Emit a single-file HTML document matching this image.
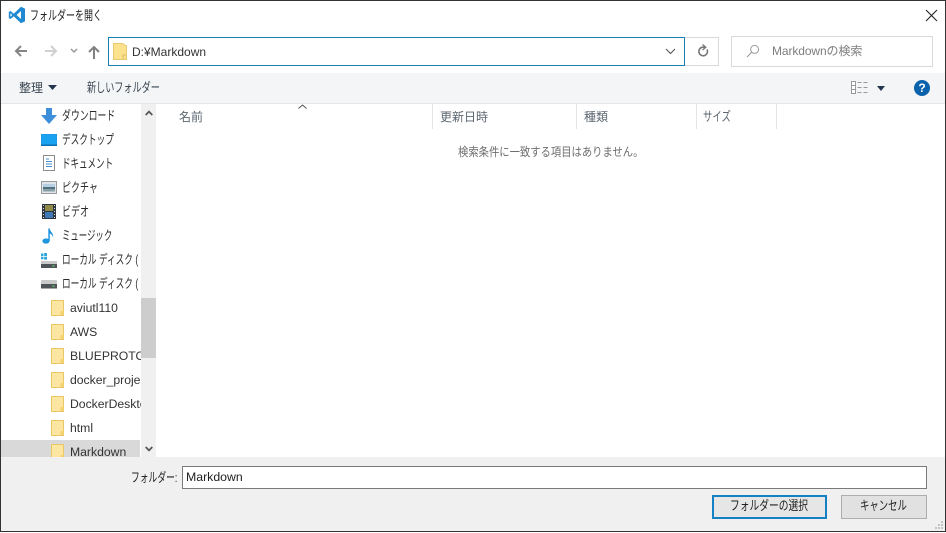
<!DOCTYPE html>
<html><head><meta charset="utf-8">
<style>
html,body{margin:0;padding:0;background:#fff}
body{width:946px;height:533px;position:relative;overflow:hidden;font-family:"Liberation Sans","Noto Sans CJK JP",sans-serif;font-size:12px;color:#333}
.a{position:absolute}
.t{position:absolute;white-space:nowrap;line-height:16px;transform-origin:0 50%}
.k{font-size:13px}
.s{display:inline-block;transform-origin:0 50%;white-space:pre}
svg{position:absolute;overflow:visible}
.nav{color:#2b2b2b;left:62px;font-size:13px}
.tree{color:#333;left:70px;width:71px;overflow:hidden;font-size:12.2px}
.h{color:#5c6670}
</style></head>
<body>
<!-- bottom panel -->
<div class="a" style="left:0;top:457px;width:946px;height:76px;background:#f0f0f0"></div>
<!-- toolbar -->
<div class="a" style="left:0;top:73px;width:946px;height:30px;background:#f3f5f6"></div>
<div class="a" style="left:0;top:103px;width:946px;height:1px;background:#e4e6e8"></div>
<!-- title -->
<svg style="left:8px;top:6px" width="18" height="18" viewBox="0 0 18 18"><path d="M13 .8 17 2.6V15.4L13 17.2 5.8 10.4 2.4 13 .8 12.1V5.9L2.4 5 5.8 7.6ZM13 5 8.6 9 13 13Z M2.4 7.2V10.8L4.3 9Z" fill="#1f8ad2" fill-rule="evenodd"/></svg>
<div class="t k" style="left:30px;top:8px;color:#222;transform:scaleX(.692)">フォルダーを開く</div>
<svg style="left:925px;top:9px" width="13" height="13"><path d="M1 1 12 12M12 1 1 12" stroke="#222" stroke-width="1.1" fill="none"/></svg>
<!-- nav arrows -->
<svg style="left:14px;top:44px" width="14" height="14"><path d="M13 7H2M7 2 2 7 7 12" stroke="#858585" stroke-width="2" fill="none"/></svg>
<svg style="left:44px;top:44px" width="14" height="14"><path d="M1 7H12M7 2 12 7 7 12" stroke="#d0d0d0" stroke-width="2" fill="none"/></svg>
<svg style="left:70px;top:48px" width="8" height="6"><path d="M1 1 4 4 7 1" stroke="#999" stroke-width="1.5" fill="none"/></svg>
<svg style="left:87px;top:45px" width="14" height="14"><path d="M7 14V2M2 7 7 2 12 7" stroke="#808080" stroke-width="2" fill="none"/></svg>
<!-- address -->
<div class="a" style="left:108px;top:37px;width:575px;height:27px;border:1px solid #1b7eb5;background:#fff"></div>
<svg style="left:113px;top:43px" width="14" height="17"><path d="M.5.5H9.5L13.5 3V16.5H.5Z" fill="#fde28e" stroke="#e8c870"/><path d="M10 16V12H13" fill="none" stroke="#e0bb60"/></svg>
<div class="t" style="left:132px;top:44px;color:#333;font-size:12px">D:¥Markdown</div>
<svg style="left:665px;top:48px" width="11" height="7"><path d="M1 1 5.5 5.5 10 1" stroke="#555" stroke-width="1.1" fill="none"/></svg>
<div class="a" style="left:685px;top:37px;width:33px;height:27px;border:1px solid #d9d9d9;border-left:0"></div>
<svg style="left:697px;top:44px" width="12" height="14"><path d="M10 5.5A4.3 4.3 0 1 1 5.5 3.2H8" stroke="#777" stroke-width="1.6" fill="none"/><path d="M5.5 .5 8.8 3.2 5.5 6" stroke="#777" stroke-width="1.3" fill="none"/></svg>
<div class="a" style="left:731px;top:36px;width:200px;height:29px;border:1px solid #d9d9d9"></div>
<svg style="left:746px;top:44px" width="14" height="14"><circle cx="8.6" cy="5.4" r="4" stroke="#999" fill="none"/><path d="M5.6 8.4 1 13" stroke="#999" fill="none"/></svg>
<div class="t" style="left:772px;top:43px;color:#7d7d7d;letter-spacing:-.1px">Markdownの検索</div>
<!-- toolbar contents -->
<div class="t" style="left:19px;top:80px;color:#3a4550">整理</div>
<svg style="left:48px;top:85px" width="9" height="5"><path d="M0 0H9L4.5 5Z" fill="#23364e"/></svg>
<div class="t k" style="left:87px;top:80px;color:#3a4550;transform:scaleX(.70)">新しいフォルダー</div>
<svg style="left:851px;top:81px" width="17" height="13"><rect x=".5" y=".5" width="4" height="12" fill="#fff" stroke="#999"/><path d="M.5 4.5H4.5M.5 8.5H4.5M6.5 1.5H10.5M12.5 1.5H16.5M6.5 6.5H10.5M12.5 6.5H16.5M6.5 11.5H10.5M12.5 11.5H16.5" stroke="#999" fill="none"/></svg>
<svg style="left:877px;top:86px" width="8" height="5"><path d="M0 0H8L4 5Z" fill="#23364e"/></svg>
<div class="a" style="left:914px;top:80px;width:16px;height:16px;border-radius:50%;background:#0a62ac;color:#fff;font:bold 12px/16px 'Liberation Sans';text-align:center">?</div>
<!-- header -->
<svg style="left:298px;top:104px" width="9" height="5"><path d="M.5 4.5 4.5 1 8.5 4.5" stroke="#555" fill="none"/></svg>
<div class="a" style="left:432px;top:104px;width:1px;height:25px;background:#e5e5e5"></div>
<div class="a" style="left:576px;top:104px;width:1px;height:25px;background:#e5e5e5"></div>
<div class="a" style="left:696px;top:104px;width:1px;height:25px;background:#e5e5e5"></div>
<div class="a" style="left:776px;top:104px;width:1px;height:25px;background:#e5e5e5"></div>
<div class="t h" style="left:179px;top:109px">名前</div>
<div class="t h" style="left:440px;top:109px">更新日時</div>
<div class="t h" style="left:584px;top:109px">種類</div>
<div class="t h k" style="left:703px;top:109px;transform:scaleX(.72)">サイズ</div>
<div class="t" style="left:458px;top:144px;color:#6d6d6d;transform:scaleX(.86)">検索条件に一致する項目はありません。</div>
<!-- scrollbar -->
<div class="a" style="left:141px;top:104px;width:15px;height:353px;background:#f0f0f0"></div>
<div class="a" style="left:141px;top:298px;width:15px;height:60px;background:#cdcdcd"></div>
<svg style="left:145px;top:110px" width="8" height="6"><path d="M.7 5 4 1.6 7.3 5" stroke="#555" stroke-width="1.7" fill="none"/></svg>
<svg style="left:145px;top:446px" width="8" height="6"><path d="M.7 1 4 4.4 7.3 1" stroke="#555" stroke-width="1.7" fill="none"/></svg>
<!-- selected row -->
<div class="a" style="left:1px;top:440px;width:139px;height:17px;background:#d9d9d9"></div>
<!-- nav icons -->
<svg style="left:41px;top:108px" width="16" height="16"><path d="M5 0H11V7H16L8 16 0 7H5Z" fill="#3d8fdc"/></svg>
<svg style="left:41px;top:134px" width="16" height="12"><rect width="16" height="12" fill="#1f95e8"/><rect x=".8" y=".8" width="14.4" height="9.6" fill="#19a2ef"/><rect y="10.5" width="16" height="1.5" fill="#0f6fb5"/></svg>
<svg style="left:43px;top:155px" width="12" height="16"><path d="M.5.5H11.5V15.5H.5Z" fill="#fff" stroke="#8c8c8c"/><path d="M3 4H6M3 6.5H9M3 9H9M3 11.5H9" stroke="#4a8fcf" fill="none"/></svg>
<svg style="left:41px;top:181px" width="16" height="13"><rect x=".5" y=".5" width="15" height="12" fill="#dfe5ea" stroke="#9a9a9a"/><rect x="2" y="3" width="12" height="3" fill="#b6cfe3"/><rect x="2" y="6" width="12" height="2" fill="#51707f"/><rect x="2" y="8" width="12" height="2.5" fill="#8aa1a8"/></svg>
<svg style="left:42px;top:204px" width="14" height="15"><rect width="14" height="15" fill="#2f3640"/><rect x="3" y="1" width="8" height="6" fill="#8f8a45"/><rect x="3" y="8" width="8" height="6" fill="#3f78b5"/><path d="M1 1.5H2M1 4.5H2M1 7.5H2M1 10.5H2M1 13.5H2M12 1.5H13M12 4.5H13M12 7.5H13M12 10.5H13M12 13.5H13" stroke="#ddd" fill="none"/></svg>
<svg style="left:42px;top:228px" width="14" height="16"><ellipse cx="4" cy="13" rx="3.6" ry="2.6" fill="#1f95e0"/><path d="M6.3 13V.5H7.8C8 4 12 5 11 9.5 10.5 7 9 6 7.8 5.5V13Z" fill="#1f95e0"/></svg>
<svg style="left:41px;top:253px" width="16" height="15"><path d="M0 .5H2.5V3H0ZM3.2 0H6V3H3.2ZM0 3.7H2.5V6.3H0ZM3.2 3.7H6V6.6H3.2Z" fill="#2aa7d8"/><rect y="8" width="16" height="3.5" fill="#c9c9c9"/><rect y="11" width="16" height="4" fill="#4e5458"/><rect x="11.5" y="12.3" width="2" height="1.3" fill="#5fd35f"/></svg>
<svg style="left:41px;top:279px" width="16" height="10"><rect y="1" width="16" height="4" rx="1" fill="#c9c9c9"/><rect y="5" width="16" height="4.5" fill="#4e5458"/><rect x="11.5" y="6.5" width="2" height="1.3" fill="#5fd35f"/></svg>
<!-- folder icons -->
<svg width="0" height="0" style="left:0;top:0"><defs><g id="f"><path d="M.5.5H12.5V15.5H.5Z" fill="#fde6a2" stroke="#eac765"/><path d="M9.5 15V11H12.5V15Z" fill="#f6d36f"/></g></defs></svg>
<svg style="left:51px;top:300px" width="13" height="16"><use href="#f"/></svg>
<svg style="left:51px;top:324px" width="13" height="16"><use href="#f"/></svg>
<svg style="left:51px;top:348px" width="13" height="16"><use href="#f"/></svg>
<svg style="left:51px;top:372px" width="13" height="16"><use href="#f"/></svg>
<svg style="left:51px;top:396px" width="13" height="16"><use href="#f"/></svg>
<svg style="left:51px;top:420px" width="13" height="16"><use href="#f"/></svg>
<div class="a" style="left:51px;top:444px;width:13px;height:13px;overflow:hidden"><svg style="left:0;top:0" width="13" height="16"><use href="#f"/></svg></div>
<!-- nav labels -->
<div class="t nav" style="top:108px;transform:scaleX(.683)">ダウンロード</div>
<div class="t nav" style="top:132px;transform:scaleX(.665)">デスクトップ</div>
<div class="t nav" style="top:156px;transform:scaleX(.655)">ドキュメント</div>
<div class="t nav" style="top:180px;transform:scaleX(.692)">ピクチャ</div>
<div class="t nav" style="top:204px;transform:scaleX(.692)">ビデオ</div>
<div class="t nav" style="top:228px;transform:scaleX(.646)">ミュージック</div>
<div class="t nav" style="top:252px;width:79px;overflow:hidden"><span class="s" style="transform:scaleX(.665)">ローカル ディスク (</span></div>
<div class="t nav" style="top:276px;width:79px;overflow:hidden"><span class="s" style="transform:scaleX(.665)">ローカル ディスク (</span></div>
<div class="t tree" style="top:300px">aviutl110</div>
<div class="t tree" style="top:324px">AWS</div>
<div class="t tree" style="top:348px">BLUEPROTOCOL</div>
<div class="t tree" style="top:372px">docker_project</div>
<div class="t tree" style="top:396px">DockerDesktop</div>
<div class="t tree" style="top:420px">html</div>
<div class="t tree" style="top:444px;height:13px">Markdown</div>
<!-- bottom -->
<div class="t k" style="left:131px;top:470px;color:#222;transform:scaleX(.675)">フォルダー:</div>
<div class="a" style="left:182px;top:466px;width:743px;height:21px;background:#fff;border:1px solid #7a7a7a"></div>
<div class="t" style="left:186px;top:469px;color:#222;font-size:12.3px">Markdown</div>
<div class="a" style="left:712px;top:495px;width:111px;height:20px;border:2px solid #1381c4;background:#e6e6e6"></div>
<div class="t k" style="left:730px;top:498px;color:#222;transform:scaleX(.75)">フォルダーの選択</div>
<div class="a" style="left:841px;top:495px;width:84px;height:22px;border:1px solid #adadad;background:#e1e1e1"></div>
<div class="t k" style="left:860px;top:498px;color:#222;transform:scaleX(.72)">キャンセル</div>
<svg style="left:934px;top:520px" width="10" height="10"><path d="M7 1h2v2H7zM4 4h2v2H4zM7 4h2v2H7zM1 7h2v2H1zM4 7h2v2H4zM7 7h2v2H7z" fill="#c4c4c4"/></svg>
<!-- window frame -->
<div class="a" style="left:0;top:0;width:946px;height:1px;background:#333"></div>
<div class="a" style="left:0;top:0;width:1px;height:532px;background:#333"></div>
<div class="a" style="left:0;top:531px;width:946px;height:1px;background:#333"></div>
<div class="a" style="left:0;top:532px;width:946px;height:1px;background:#fff"></div>
<div class="a" style="left:945px;top:0;width:1px;height:532px;background:#333"></div>
</body></html>
